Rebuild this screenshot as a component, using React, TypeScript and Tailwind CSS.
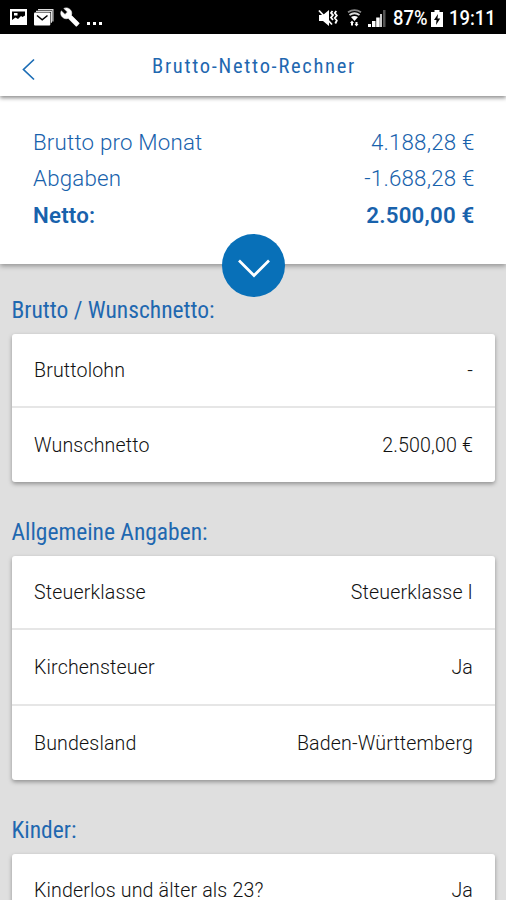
import { ReactNode } from "react";

type Entry = { label: string; value: string };

const SUMMARY = [
  { label: "Brutto pro Monat", value: "4.188,28 €", total: false },
  { label: "Abgaben", value: "-1.688,28 €", total: false },
  { label: "Netto:", value: "2.500,00 €", total: true },
];

const GROSS: Entry[] = [
  { label: "Bruttolohn", value: "-" },
  { label: "Wunschnetto", value: "2.500,00 €" },
];

const GENERAL: Entry[] = [
  { label: "Steuerklasse", value: "Steuerklasse I" },
  { label: "Kirchensteuer", value: "Ja" },
  { label: "Bundesland", value: "Baden-Württemberg" },
];

const CHILDREN: Entry[] = [{ label: "Kinderlos und älter als 23?", value: "Ja" }];

function StatusBar() {
  return (
    <div className="flex h-[34px] shrink-0 items-center justify-between bg-black pr-[11px] pl-[10px] text-white">
      <div className="flex items-center">
        {/* picture */}
        <svg width="17" height="16" viewBox="0 0 17 16">
          <path
            fill="#fff"
            fillRule="evenodd"
            d="M0 0h17v16H0zM2 2.500v8.500l3.500-2.500 2.500 1.500 3-3 1.500 1 2.500-1.500V2.500zM4 4h3.500v2.500H4z"
          />
        </svg>
        {/* mails */}
        <svg className="ml-[7px]" width="20" height="17" viewBox="0 0 20 17">
          <path fill="#ddd" d="M4 0h15.500v12.500h-1.200V1.200H4z" />
          <path fill="#ddd" d="M2 1.700h16v12h-1.200V2.900H2z" />
          <rect y="3.500" width="16.300" height="13" rx="1" fill="#fff" />
          <path d="M3 6.500l5.200 4.300L13.500 6.500" fill="none" stroke="#000" strokeWidth="1.500" />
        </svg>
        {/* wrench */}
        <svg className="ml-[6px]" width="20" height="20" viewBox="0 0 24 24">
          <path
            fill="#fff"
            stroke="#fff"
            strokeWidth="0.8"
            d="M22.700 19l-9.100-9.100c.9-2.300.4-5-1.500-6.900-2-2-5-2.400-7.400-1.300L9 6 6 9 1.600 4.700C.4 7.100.9 10.100 2.900 12.100c1.900 1.900 4.600 2.400 6.900 1.500l9.100 9.100c.4.4 1 .4 1.400 0l2.300-2.300c.5-.4.5-1.100.1-1.400z"
          />
        </svg>
        <div className="mt-[13px] ml-[7px] flex gap-[3px]">
          <span className="size-[3px] bg-white" />
          <span className="size-[3px] bg-white" />
          <span className="size-[3px] bg-white" />
        </div>
      </div>

      <div className="flex items-center pt-[2px]">
        {/* muted, vibrating */}
        <svg className="mr-[1px]" width="20" height="18" viewBox="0 0 20 18">
          <path fill="#fff" d="M1 6h4l6-5v16l-6-5H1z" />
          <path d="M1 1.500l13 14" stroke="#fff" strokeWidth="1.800" />
          <path
            d="M14.500 2l-1.500 2 2 2-2 2.500 2 2.500M18.300 2l-1.500 2 2 2.500-2 2.500 2 2.500-1.500 3"
            fill="none"
            stroke="#fff"
            strokeWidth="1.800"
          />
        </svg>
        {/* wifi */}
        <svg className="ml-[8px]" width="15" height="18" viewBox="0 0 15 18">
          <path d="M1 3.200Q7.500-.8 14 3.200" fill="none" stroke="#888" strokeWidth="1.800" />
          <path d="M2.500 6Q7.500 2.500 12.500 6" fill="none" stroke="#ddd" strokeWidth="1.800" />
          <path fill="#fff" d="M4 8q3.500-2.200 7 0L7.500 12zM5 11.500l2 2.500H6v2.500H4V14H3zM9.500 17.500l-2-2.500h1v-2h2v2h1z" />
        </svg>
        {/* signal strength */}
        <svg className="ml-[6px]" width="18" height="17" viewBox="0 0 18 17">
          <path fill="#fff" d="M0 14h3v3H0zM4 11h3.500v6H4zM8.200 7.500h3.500V17H8.200z" />
          <path fill="#ccc" d="M12 4h2v13h-2z" />
          <path fill="#555" d="M15 0h2.500v17H15z" />
        </svg>
        <span className="ml-[7px] w-[35px] origin-left scale-x-[0.92] text-[20px] leading-none font-medium whitespace-nowrap">
          87%
        </span>
        {/* charging battery */}
        <svg className="ml-[3px]" width="12" height="17" viewBox="0 0 12 17">
          <path fill="#fff" d="M3.500 0h5v2H12v15H0V2h3.500z" />
          <path fill="#000" d="M7 4L3 10h2.500L5 15l4.200-6.500H6.500z" />
        </svg>
        <span className="ml-[6px] w-[46px] origin-left scale-x-[0.92] text-[20px] leading-none font-medium whitespace-nowrap">
          19:11
        </span>
      </div>
    </div>
  );
}

function Header() {
  return (
    <header className="relative z-20 flex h-[62px] shrink-0 items-center justify-center bg-white pt-[2px] shadow-[0_2px_4px_rgba(0,0,0,0.45)]">
      <svg className="absolute top-[24px] left-[21px]" width="15" height="23" viewBox="0 0 15 23">
        <path d="M13 1.500L2.500 11.500 13 21.500" fill="none" stroke="#1c6db5" strokeWidth="1.700" />
      </svg>
      <h1 className="pl-[2px] font-[Roboto_Condensed,Roboto,sans-serif] text-[20.500px] tracking-[1.700px] text-[#1f68b0] [font-stretch:75%]">
        Brutto-Netto-Rechner
      </h1>
    </header>
  );
}

function Summary() {
  return (
    <section className="relative z-10 h-[168px] shrink-0 bg-white pt-[27.500px] pr-[31.500px] pl-[33px] text-[22.300px] leading-[36.500px] tracking-[0.200px] text-[#1862ac] shadow-[0_2px_5px_rgba(0,0,0,0.35)]">
      {SUMMARY.map((row) => (
        <div
          key={row.label}
          className={row.total ? "flex justify-between font-semibold" : "flex justify-between [font-weight:350]"}
        >
          <span>{row.label}</span>
          <span>{row.value}</span>
        </div>
      ))}
      <button className="absolute top-[138px] left-[222px] flex size-[63px] items-center justify-center rounded-full bg-[#0870b8]">
        <svg width="34" height="20" viewBox="0 0 34 20" className="mt-[7px]">
          <path d="M2 1.500L17 16.500 32 1.500" fill="none" stroke="#fff" strokeWidth="2.700" />
        </svg>
      </button>
    </section>
  );
}

function Group({ title, children }: { title: string; children: ReactNode }) {
  return (
    <section className="mb-[34px]">
      <h2 className="h-[40px] pt-px font-[Roboto_Condensed,Roboto,sans-serif] text-[23.500px] leading-[31px] text-[#1f68b0] [font-stretch:75%]">
        {title}
      </h2>
      <div className="rounded-[3px] bg-white shadow-[0_2px_4px_rgba(0,0,0,0.35)]">{children}</div>
    </section>
  );
}

function Row({ label, value }: Entry) {
  return (
    <div className="flex h-[76px] items-center justify-between border-t-2 border-[#e6e6e6] pt-[2px] pr-[21.500px] pl-[22.500px] text-[19.600px] tracking-[0.150px] text-[#111] [font-weight:350] first:h-[72px] first:border-t-0">
      <span>{label}</span>
      <span>{value}</span>
    </div>
  );
}

export default function App() {
  return (
    <div className="flex h-[900px] w-[506px] flex-col overflow-hidden bg-[#dfdfdf] font-[Roboto,sans-serif]">
      <StatusBar />
      <Header />
      <Summary />
      <main className="px-[11.500px] pt-[30px]">
        <Group title="Brutto / Wunschnetto:">
          {GROSS.map((row) => (
            <Row key={row.label} {...row} />
          ))}
        </Group>
        <Group title="Allgemeine Angaben:">
          {GENERAL.map((row) => (
            <Row key={row.label} {...row} />
          ))}
        </Group>
        <Group title="Kinder:">
          {CHILDREN.map((row) => (
            <Row key={row.label} {...row} />
          ))}
        </Group>
      </main>
    </div>
  );
}
